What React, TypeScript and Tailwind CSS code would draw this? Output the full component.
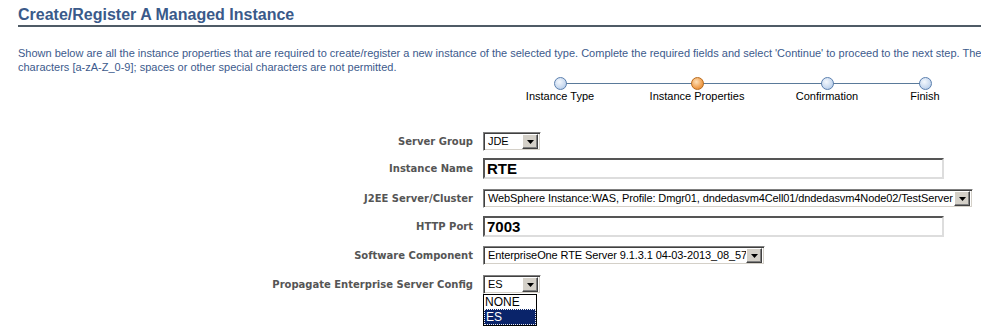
import React from "react";

const steps = [
  { label: "Instance Type", current: false },
  { label: "Instance Properties", current: true },
  { label: "Confirmation", current: false },
  { label: "Finish", current: false },
];

function Arrow() {
  return (
    <span className="flex h-[15px] w-[16px] shrink-0 items-center justify-center border border-t-white border-l-white border-r-[#404040] border-b-[#404040] bg-[#d4d0c8] shadow-[inset_-1px_-1px_0_#808080]">
      <svg width="7" height="4" viewBox="0 0 7 4">
        <path d="M0 0h7L3.5 4z" fill="#000" />
      </svg>
    </span>
  );
}

function Select({ value, width }: { value: string; width: string }) {
  return (
    <div
      className={`flex h-[19px] ${width} items-center border border-t-[#808080] border-l-[#808080] border-r-white border-b-white bg-white shadow-[inset_1px_1px_0_#404040,inset_-1px_-1px_0_#d4d0c8]`}
    >
      <span className="flex-1 overflow-hidden whitespace-nowrap pl-[4px] text-[11px] leading-none tracking-[-0.1px] text-black">
        {value}
      </span>
      <span className="pr-[2px]">
        <Arrow />
      </span>
    </div>
  );
}

function TextInput({ value }: { value: string }) {
  return (
    <div className="flex h-[21px] w-[461px] items-center border-2 border-t-[#555] border-l-[#555] border-r-[#ddd] border-b-[#ddd] bg-white pl-[2px] text-[15px] font-bold leading-none text-black">
      {value}
    </div>
  );
}

function Row({ label, className, children }: { label: string; className: string; children: React.ReactNode }) {
  return (
    <div className={`flex items-center ${className}`}>
      <div className="w-[473px] text-right text-[10px] font-bold text-[#555] [font-family:'DejaVu_Sans',Tahoma,sans-serif]">
        {label}
      </div>
      <div className="ml-[10px]">{children}</div>
    </div>
  );
}

export default function App() {
  return (
    <div className="h-[332px] w-[981px] overflow-hidden bg-white [font-family:'Liberation_Sans',Arial,sans-serif]">
      <div className="pl-[18px] pt-[6px]">
        <h1 className="border-b-2 border-[#4f5b66] pb-[1px] text-[16px] font-bold leading-[18px] text-[#3a5a8a]">
          Create/Register A Managed Instance
        </h1>
        <p className="mt-[19px] whitespace-nowrap text-[11px] leading-[14px] text-[#3c5a8c]">
          Shown below are all the instance properties that are required to create/register a new instance of the selected type. Complete the required fields and select 'Continue' to proceed to the next step. The
          <br />
          characters [a-zA-Z_0-9]; spaces or other special characters are not permitted.
        </p>
      </div>

      <div className="relative ml-[510px] mt-[3px] grid w-[470px] grid-cols-[100px_174px_86px_110px]">
        <div className="absolute left-[50px] top-[6px] h-[1px] w-[365px] bg-[#5a7a9a]" />
        {steps.map((s) => (
          <div key={s.label} className="relative flex flex-col items-center">
            <span
              className={`h-[13px] w-[13px] rounded-full border ${
                s.current
                  ? "border-[#b86a1c] bg-[radial-gradient(circle_at_40%_35%,#fde0b8,#f0a050_60%,#d8802c)]"
                  : "border-[#5b7fae] bg-[radial-gradient(circle_at_40%_35%,#f4f8fd,#c8d9ef_60%,#9fbce0)]"
              }`}
            />
            <span className="whitespace-nowrap text-[11px] leading-[12px] text-black">{s.label}</span>
          </div>
        ))}
      </div>

      <div className="mt-[30px] flex flex-col">
        <Row label="Server Group" className="">
          <Select value="JDE" width="w-[58px]" />
        </Row>
        <Row label="Instance Name" className="mt-[7px]">
          <TextInput value="RTE" />
        </Row>
        <Row label="J2EE Server/Cluster" className="mt-[10px]">
          <Select
            value="WebSphere Instance:WAS, Profile: Dmgr01, dndedasvm4Cell01/dndedasvm4Node02/TestServer"
            width="w-[490px]"
          />
        </Row>
        <Row label="HTTP Port" className="mt-[8px]">
          <TextInput value="7003" />
        </Row>
        <Row label="Software Component" className="mt-[9px]">
          <Select value="EnterpriseOne RTE Server 9.1.3.1 04-03-2013_08_57" width="w-[282px]" />
        </Row>
        <Row label="Propagate Enterprise Server Config" className="mt-[10px]">
          <div className="relative">
            <Select value="ES" width="w-[58px]" />
            <div className="absolute left-0 top-[19px] w-[54px] border border-black bg-white text-[12px] leading-[14px] text-black">
              <div className="pl-[1px]">NONE</div>
              <div className="border border-dotted border-[#f0f0f0] bg-[#0a246a] pl-[1px] text-white">ES</div>
            </div>
          </div>
        </Row>
      </div>
    </div>
  );
}
